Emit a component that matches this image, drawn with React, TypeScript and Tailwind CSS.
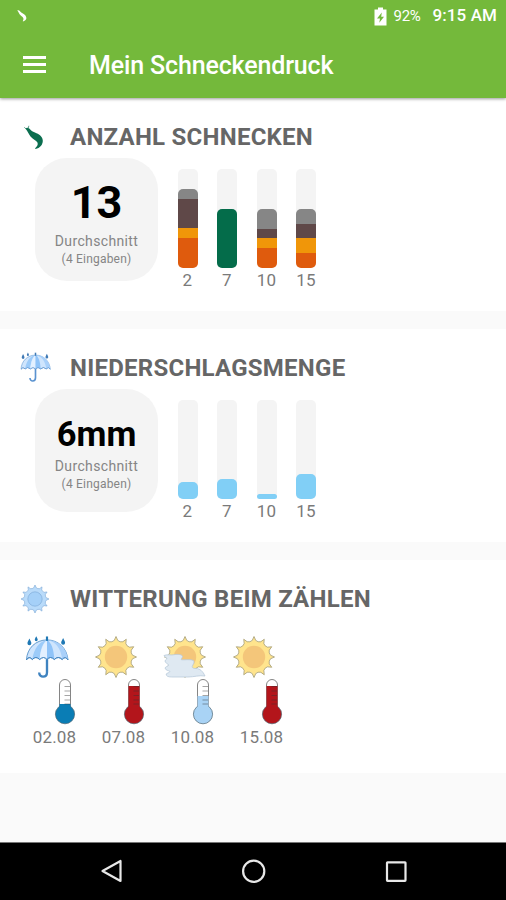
import type { ReactNode } from "react";

type Segment = { color: string; height: number };
type BarData = { label: string; segments: Segment[] };

const SLUG_BARS: BarData[] = [
  {
    label: "2",
    segments: [
      { color: "#868686", height: 10 },
      { color: "#5f4848", height: 29 },
      { color: "#f09609", height: 10 },
      { color: "#df5b0d", height: 30 },
    ],
  },
  { label: "7", segments: [{ color: "#046c4a", height: 59 }] },
  {
    label: "10",
    segments: [
      { color: "#868686", height: 20 },
      { color: "#5f4848", height: 9 },
      { color: "#f09609", height: 10 },
      { color: "#df5b0d", height: 20 },
    ],
  },
  {
    label: "15",
    segments: [
      { color: "#868686", height: 15 },
      { color: "#5f4848", height: 14 },
      { color: "#f09609", height: 15 },
      { color: "#df5b0d", height: 15 },
    ],
  },
];

const RAIN_BARS: BarData[] = [
  { label: "2", segments: [{ color: "#81cff6", height: 17 }] },
  { label: "7", segments: [{ color: "#81cff6", height: 20 }] },
  { label: "10", segments: [{ color: "#81cff6", height: 5 }] },
  { label: "15", segments: [{ color: "#81cff6", height: 25 }] },
];

type WeatherKind = "rain" | "sun" | "cloudy";

const WEATHER: { date: string; kind: WeatherKind; level: number; color: string }[] = [
  { date: "02.08", kind: "rain", level: 25, color: "#0a7db5" },
  { date: "07.08", kind: "sun", level: 7, color: "#b3151b" },
  { date: "10.08", kind: "cloudy", level: 17, color: "#a9d3f5" },
  { date: "15.08", kind: "sun", level: 7, color: "#b3151b" },
];

function polar(r: number, angle: number) {
  return `${(22 + r * Math.cos(angle)).toFixed(2)} ${(22 + r * Math.sin(angle)).toFixed(2)}`;
}

// spikes joined by rounded valleys
function sunPath(spikes: number, outer: number, inner: number) {
  const step = (Math.PI * 2) / spikes;
  let d = `M${polar(outer, -Math.PI / 2)}`;
  for (let i = 0; i < spikes; i++) {
    const a = -Math.PI / 2 + i * step;
    d += `Q${polar(inner, a + step * 0.18)} ${polar(inner + 0.4, a + step / 2)}`;
    d += `Q${polar(inner, a + step * 0.82)} ${polar(outer, a + step)}`;
  }
  return `${d}Z`;
}

const SUN_PATH = sunPath(12, 20.5, 15.4);

function SlugIcon() {
  return (
    <svg width="24" height="26" viewBox="0 0 24 26" fill="none">
      <path
        d="M2.500 4.800C3.500 3.300 5.500 3.500 7 5.300C8.500 7.200 10.500 8 13.500 9.200C17 10.600 19.800 13.200 19.800 16.800C19.800 20.800 17 24.300 12.500 25C11.900 24.600 12.200 24 12.800 23.500C14.500 22 15.300 20.200 14.300 18.300C13.200 16.400 9.700 15.200 7.500 12.500C5.500 10 5 7.500 2.500 4.800Z"
        fill="#0b6e4f"
      />
      <path d="M3.500 5.500L1.300 3.200M5.300 4.500L5.800 1.800" stroke="#3b8a70" strokeWidth="0.800" />
    </svg>
  );
}

function UmbrellaIcon({ size, muted }: { size: number; muted?: boolean }) {
  const line = muted ? "#5b93d0" : "#3f83c0";
  const drop = muted ? "#3f79b5" : "#1f78b4";
  return (
    <svg width={size} height={size} viewBox="0 0 45 45" fill="none">
      <path d="M22.500 24V37.500C22.500 43.500 14.500 43.500 14.500 37.800" stroke={line} strokeWidth="2.400" />
      <path
        d="M1.500 25C2 13 11 4.500 22.500 4.500S43 13 44 25Q41.300 20.500 38 24.500Q34 20.500 30 24.500Q26 20.500 22.500 24.500Q19 20.500 15 24.500Q11 20.500 7.500 24.500Q4 20.500 1.500 25Z"
        fill="#cfe5fd"
        stroke={line}
        strokeWidth="0.800"
      />
      <path d="M22.500 4.500C15 6 9 13 7.500 24.500Q11 20.500 15 24.500C15.500 14 18.500 7 22.500 4.500Z" fill="#9ccbf9" />
      <path d="M22.500 4.500C19 8 16 14 15 24.500Q19 20.500 22.500 24.500Z" fill="#e3f0ff" />
      <path d="M22.500 4.500C27 7 29.500 14 30 24.500Q26 20.500 22.500 24.500Z" fill="#8fc3f8" />
      <path d="M22.500 4.500C31 6 37 13 38 24.500Q41.300 20.500 44 25C43 13 34 4.500 22.500 4.500Z" fill="#a9d0fa" />
      <path d="M1.500 25Q4 20.500 7.500 24.500Q11 20.500 15 24.500Q19 20.500 22.500 24.500Q26 20.500 30 24.500Q34 20.500 38 24.500Q41.300 20.500 44 25" stroke={line} strokeWidth="1" />
      <path d="M22.500 1V5.500" stroke={drop} strokeWidth="2.200" />
      <path d="M4.500 3C5.500 5.500 6.500 6.500 6.500 8A2 2 0 0 1 2.500 8C2.500 6.500 3.500 5.500 4.500 3Z" fill={drop} />
      <path d="M11.500 0.800C12.300 2.500 13 3.300 13 4.400A1.500 1.500 0 0 1 10 4.400C10 3.300 10.700 2.500 11.500 0.800Z" fill={drop} />
      <path d="M39 2.500C40 5 41 6 41 7.500A2 2 0 0 1 37 7.500C37 6 38 5 39 2.500Z" fill={drop} />
    </svg>
  );
}

function SunIcon({ size, blue }: { size: number; blue?: boolean }) {
  return (
    <svg width={size} height={size} viewBox="0 0 44 44">
      <path
        d={SUN_PATH}
        fill={blue ? "#b9dbfa" : "#ffe48d"}
        stroke={blue ? "#7fabd8" : "#a39a70"}
        strokeWidth={blue ? 1 : 0.8}
      />
      <circle
        cx="22"
        cy="22"
        r={blue ? 10.5 : 11.2}
        fill={blue ? "#a5d0f8" : "#f4c67a"}
        stroke={blue ? "#7fabd8" : "#f4c67a"}
        strokeWidth={blue ? 1 : 0}
      />
    </svg>
  );
}

function CloudySunIcon() {
  return (
    <svg width="44" height="44" viewBox="0 0 44 44" className="overflow-visible">
      <path d={SUN_PATH} fill="#ffe48d" stroke="#a39a70" strokeWidth="0.800" />
      <circle cx="22" cy="22" r="11.200" fill="#f4c67a" />
      <path
        d="M1 20.500C4 19 8 20.500 11 19.700C15 19 19.500 19.500 19.500 21.500C19.300 23 17.500 24 18.500 24.800C22 25 28 24 30.500 25.500C32 27.500 30 29 29.500 31C28.500 32.500 30 33.500 33 33.500C37 33.500 40 36.500 42 41C36 40 31 42 25 42H8.500C5 42 3 41 3.200 39C4 37.800 6.500 38 7 36.500C5.500 35.300 2.500 35.500 2 33C2.500 31.500 5 31.500 5.500 30C5 28.300 2.300 28.500 2 26C2.300 24.500 4 24.500 4 23.300C3 22.500 1.500 22 1 20.500Z"
        fill="#dfe9f2"
        stroke="#b9cadb"
        strokeWidth="0.800"
      />
    </svg>
  );
}

function Thermometer({ level, color }: { level: number; color: string }) {
  return (
    <svg width="22" height="46" viewBox="0 0 22 46" fill="none">
      <path d="M5.500 28V6A5.500 5.500 0 0 1 16.500 6V28" fill="#fff" stroke="#777" strokeWidth="0.900" />
      <circle cx="11" cy="35.200" r="9.600" fill={color} stroke="#4d6572" strokeWidth="0.700" />
      <rect x="5.500" y={level} width="11" height={32 - level} fill={color} />
      <path d="M10.500 7.500H16M10.500 12H16M10.500 16.500H16M10.500 21H16M10.500 25H16" stroke="#333" strokeOpacity="0.55" strokeWidth="0.800" />
    </svg>
  );
}

function WeatherIcon({ kind }: { kind: WeatherKind }) {
  if (kind === "rain") return <UmbrellaIcon size={45} />;
  if (kind === "cloudy") return <CloudySunIcon />;
  return <SunIcon size={44} />;
}

function Section({ icon, title, children }: { icon: ReactNode; title: string; children: ReactNode }) {
  return (
    <section className="h-[213px] bg-white">
      <div className="flex h-[60px] items-center pt-[17px]">
        <div className="flex w-[70px] justify-center">{icon}</div>
        <h2 className="text-2xl leading-none font-bold tracking-[0.25px] text-[#666]">{title}</h2>
      </div>
      {children}
    </section>
  );
}

function AverageCard({ value, small }: { value: string; small?: boolean }) {
  return (
    <div className="flex h-[123px] w-[123px] flex-col items-center rounded-[32px] bg-[#f4f4f4]">
      <div
        className={
          small
            ? "mt-[25px] text-[34.5px] leading-[40px] font-bold text-black"
            : "mt-[20px] text-[45px] leading-[50px] font-bold text-black"
        }
      >
        {value}
      </div>
      <div
        className={
          small
            ? "mt-[2px] text-sm leading-5 tracking-[0.35px] text-[#858585]"
            : "mt-[3px] text-sm leading-5 tracking-[0.35px] text-[#858585]"
        }
      >
        Durchschnitt
      </div>
      <div className="text-xs leading-4 tracking-[0.2px] text-[#858585]">(4 Eingaben)</div>
    </div>
  );
}

function BarChart({ bars }: { bars: BarData[] }) {
  return (
    <div className="mt-[11px] ml-[19.5px] flex gap-[19.5px]">
      {bars.map((bar) => (
        <div key={bar.label} className="flex w-5 flex-col items-center">
          <div className="flex h-[99px] w-5 flex-col justify-end rounded-[5px] bg-[#f4f4f4]">
            <div className="overflow-hidden rounded-[5px]">
              {bar.segments.map((s) => (
                <div key={s.color} style={{ height: s.height, background: s.color }} />
              ))}
            </div>
          </div>
          <span className="mt-[2px] text-[17px] leading-5 tracking-[0.3px] text-[#7a7a7a]">{bar.label}</span>
        </div>
      ))}
    </div>
  );
}

export default function App() {
  return (
    <div className="flex h-[900px] w-[506px] flex-col overflow-hidden bg-[#fafafa] font-['Roboto',sans-serif]">
      <header className="z-10 h-[98px] shrink-0 bg-[#74b93b] text-white shadow-[0_1px_3px_rgba(0,0,0,0.4)]">
        <div className="flex h-8 items-center pr-[9px] pl-4">
          <svg width="12" height="14" viewBox="0 0 12 14">
            <path d="M1.300 1.500C3.300 0.500 4.500 3.300 6.500 4.300C10.500 6.300 12.500 10.500 7 12.500C6.500 12 7.500 11 7.500 10C7.500 8.500 6 7.800 4.500 6.300C3 4.800 2.800 3 1.300 1.500Z" fill="#fff" />
          </svg>
          <svg width="13" height="19" viewBox="0 0 13 19" className="mr-[7px] ml-auto">
            <path d="M4 0.500H9V2.500H12.500V18.500H0.500V2.500H4Z" fill="#fff" />
            <path d="M7.800 5.500L3 11.500H6L5.300 15.800L10 9.800H7.200Z" fill="#74b93b" />
          </svg>
          <span className="mr-[12px] text-[15px] tracking-[-0.3px]">92%</span>
          <span className="text-[17px] font-medium tracking-[0.1px]">9:15 AM</span>
        </div>
        <div className="flex h-[66px] items-center pl-[23px]">
          <div className="mb-[2px] flex w-[23px] flex-col gap-[4px]">
            <div className="h-[3px] bg-white" />
            <div className="h-[3px] bg-white" />
            <div className="h-[3px] bg-white" />
          </div>
          <h1 className="ml-[43px] text-[25px] leading-none font-medium tracking-[-0.15px]">Mein Schneckendruck</h1>
        </div>
      </header>

      <main className="flex flex-1 flex-col gap-[18px]">
        <Section icon={<SlugIcon />} title="ANZAHL SCHNECKEN">
          <div className="flex pl-[35px]">
            <AverageCard value="13" />
            <BarChart bars={SLUG_BARS} />
          </div>
        </Section>

        <Section icon={<UmbrellaIcon size={31} muted />} title="NIEDERSCHLAGSMENGE">
          <div className="flex pl-[35px]">
            <AverageCard value="6mm" small />
            <BarChart bars={RAIN_BARS} />
          </div>
        </Section>

        <Section icon={<SunIcon size={30} blue />} title="WITTERUNG BEIM ZÄHLEN">
          <div className="flex bg-white pt-[15px] pb-[3px] pl-5">
            {WEATHER.map((w) => (
              <div key={w.date} className="flex w-[69px] flex-col items-center">
                <div className="ml-[5px] flex h-11 w-11 justify-center self-start">
                  <WeatherIcon kind={w.kind} />
                </div>
                <div className="ml-5">
                  <Thermometer level={w.level} color={w.color} />
                </div>
                <span className="mt-[2px] text-[17px] leading-5 tracking-[0.2px] text-[#7a7a7a]">{w.date}</span>
              </div>
            ))}
          </div>
        </Section>
      </main>

      <nav className="flex h-[58px] shrink-0 items-center border-t border-[#777] bg-black">
        <svg width="506" height="57" viewBox="0 0 506 57" fill="none" stroke="#e8e8e8" strokeWidth="2.200">
          <path d="M102.500 28L120.500 18V38Z" strokeLinejoin="round" />
          <circle cx="253.700" cy="28.300" r="10.600" />
          <rect x="387" y="19.300" width="18.500" height="18.500" rx="0.500" />
        </svg>
      </nav>
    </div>
  );
}
